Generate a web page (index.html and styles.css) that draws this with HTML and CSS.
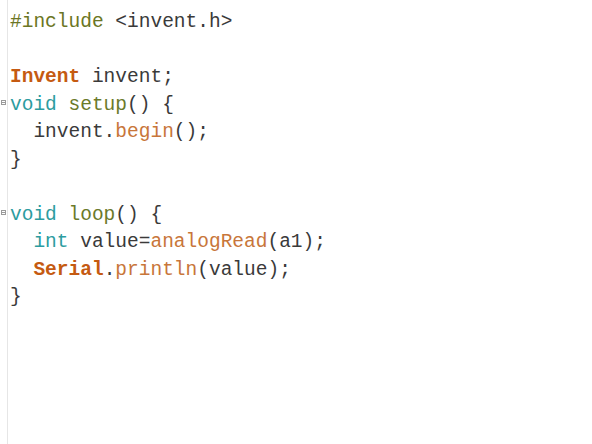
FILE: index.html
```html
<!DOCTYPE html>
<html>
<head>
<meta charset="utf-8">
<link rel="stylesheet" href="styles.css">
</head>
<body>
<div class="editor">
  <div class="gutter">
    <div class="gline"></div>
    <div class="gline"></div>
    <div class="gline"></div>
    <div class="gline"><span class="fold"></span></div>
    <div class="gline"></div>
    <div class="gline"></div>
    <div class="gline"></div>
    <div class="gline"><span class="fold"></span></div>
    <div class="gline"></div>
    <div class="gline"></div>
    <div class="gline"></div>
  </div>
  <div class="code">
    <div class="line"><span class="pp">#include</span> &lt;invent.h&gt;</div>
    <div class="line"> </div>
    <div class="line"><span class="cls">Invent</span> invent;</div>
    <div class="line"><span class="kw">void</span> <span class="fn">setup</span>() {</div>
    <div class="line">  invent.<span class="call">begin</span>();</div>
    <div class="line">}</div>
    <div class="line"> </div>
    <div class="line"><span class="kw">void</span> <span class="fn">loop</span>() {</div>
    <div class="line">  <span class="kw">int</span> value=<span class="call">analogRead</span>(a1);</div>
    <div class="line">  <span class="cls">Serial</span>.<span class="call">println</span>(value);</div>
    <div class="line">}</div>
  </div>
</div>
</body>
</html>
```
FILE: styles.css
```css
html, body {
  margin: 0;
  padding: 0;
  background: #ffffff;
}
.editor {
  display: flex;
  height: 444px;
  width: 592px;
}
.gutter {
  width: 7px;
  border-right: 1px solid #e6e6e6;
  padding-top: 7px;
  flex: none;
}
.gline {
  height: 27.5px;
  position: relative;
}
.fold {
  position: absolute;
  left: 1px;
  top: 10px;
  width: 5px;
  height: 5px;
  border: 1px solid #9a9a9a;
  box-sizing: border-box;
  background: linear-gradient(#9a9a9a, #9a9a9a) no-repeat center / 3px 1px;
}
.code {
  padding-top: 9px;
  padding-left: 2px;
  font-family: "Liberation Mono", "Courier New", monospace;
  font-size: 19.5px;
  color: #3a3a3a;
}
.line {
  height: 27.5px;
  line-height: 27.5px;
  white-space: pre;
}
.pp { color: #6b7624; }
.cls { color: #c55a11; font-weight: bold; }
.kw { color: #2c9ca0; }
.fn { color: #6b7a2a; }
.call { color: #c8763a; }
```
